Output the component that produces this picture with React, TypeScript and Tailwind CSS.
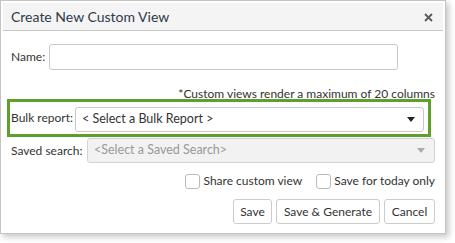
export default function App() {
  return (
    <div className="w-[455px] h-[243px] bg-white text-[#333] text-[12px] font-['Lato',sans-serif] whitespace-nowrap">
      <div className="w-[446px] h-[234px] border border-[#c4c4c4] p-[2px] shadow-[3px_3px_6px_rgba(0,0,0,0.22)] flex flex-col">
        <div className="h-[28px] bg-[#f4f4f4] border-b border-[#c8c8c8] flex items-center justify-between pl-[8px] pr-[10px]">
          <span className="text-[14px] text-[#2d3a4a] leading-none">Create New Custom View</span>
          <svg width="9" height="9" viewBox="0 0 9 9" className="mt-[1px]">
            <path d="M1 1 L8 8 M8 1 L1 8" stroke="#5a5a5a" strokeWidth="1.8" />
          </svg>
        </div>
        <div className="flex flex-col pl-[8px] pr-[8px]">
          <div className="flex items-center mt-[13px] h-[26px]">
            <span className="w-[38px] shrink-0">Name:</span>
            <div className="w-[349px] h-[26px] border border-[#c8c8c8] rounded-[3px] bg-white" />
          </div>
          <div className="text-right mt-[18px] h-[12px] leading-[12px]">*Custom views render a maximum of 20 columns</div>
          <div className="flex items-center mt-[-1px] ml-[-4px] w-[424px] h-[38px] border-[3px] border-[#5f9f2c] pl-[1px]">
            <span className="w-[64px] shrink-0">Bulk report:</span>
            <div className="w-[349px] h-[25px] border border-[#c8c8c8] rounded-[3px] bg-white flex items-center justify-between pl-[6px] pr-[8px] mt-[2px]">
              <span className="text-[#333] text-[12.5px]">&lt; Select a Bulk Report &gt;</span>
              <svg width="8" height="5" viewBox="0 0 8 5"><path d="M0 0 L8 0 L4 5 Z" fill="#222" /></svg>
            </div>
          </div>
          <div className="flex items-center mt-[1px] h-[25px]">
            <span className="w-[76px] shrink-0">Saved search:</span>
            <div className="w-[348px] h-[25px] border border-[#d4d4d4] rounded-[3px] bg-[#f2f2f2] flex items-center justify-between pl-[6px] pr-[9px]">
              <span className="text-[#999] text-[12.5px]">&lt;Select a Saved Search&gt;</span>
              <svg width="8" height="5" viewBox="0 0 8 5"><path d="M0 0 L8 0 L4 5 Z" fill="#aaa" /></svg>
            </div>
          </div>
          <div className="flex items-center justify-end mt-[10px] h-[16px]">
            <div className="flex items-center">
              <span className="w-[15px] h-[15px] border border-[#bbb] rounded-[3px] bg-white mr-[3px]" />
              <span>Share custom view</span>
            </div>
            <div className="flex items-center ml-[14px]">
              <span className="w-[15px] h-[15px] border border-[#bbb] rounded-[3px] bg-white mr-[3px]" />
              <span>Save for today only</span>
            </div>
          </div>
          <div className="flex justify-end gap-[4px] mt-[10px]">
            <button className="h-[25px] w-[39px] border border-[#ccc] rounded-[3px] bg-white">Save</button>
            <button className="h-[25px] w-[104px] border border-[#ccc] rounded-[3px] bg-white">Save &amp; Generate</button>
            <button className="h-[25px] w-[51px] border border-[#ccc] rounded-[3px] bg-white">Cancel</button>
          </div>
        </div>
      </div>
    </div>
  );
}
